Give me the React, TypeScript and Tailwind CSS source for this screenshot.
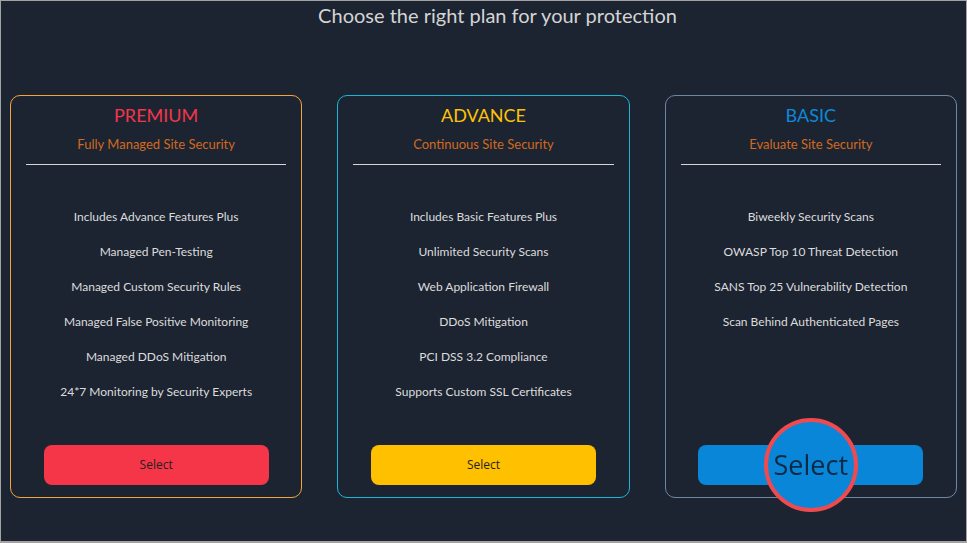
import React from "react";

type Plan = {
    name: string;
    tagline: string;
    features: string[];
    border: string;
    title: string;
    button: string;
    highlight?: boolean;
};

const plans: Plan[] = [
    {
        name: "PREMIUM",
        tagline: "Fully Managed Site Security",
        features: [
            "Includes Advance Features Plus",
            "Managed Pen-Testing",
            "Managed Custom Security Rules",
            "Managed False Positive Monitoring",
            "Managed DDoS Mitigation",
            "24*7 Monitoring by Security Experts",
        ],
        border: "border-[#f5a43c]",
        title: "text-[#f2364b]",
        button: "bg-[#f43648]",
    },
    {
        name: "ADVANCE",
        tagline: "Continuous Site Security",
        features: [
            "Includes Basic Features Plus",
            "Unlimited Security Scans",
            "Web Application Firewall",
            "DDoS Mitigation",
            "PCI DSS 3.2 Compliance",
            "Supports Custom SSL Certificates",
        ],
        border: "border-[#19b6d8]",
        title: "text-[#ffc107]",
        button: "bg-[#ffc000]",
    },
    {
        name: "BASIC",
        tagline: "Evaluate Site Security",
        features: [
            "Biweekly Security Scans",
            "OWASP Top 10 Threat Detection",
            "SANS Top 25 Vulnerability Detection",
            "Scan Behind Authenticated Pages",
        ],
        border: "border-[#6f87a2]",
        title: "text-[#0d89d9]",
        button: "bg-[#0986d8]",
        highlight: true,
    },
];

const PlanCard: React.FC<{ plan: Plan }> = ({ plan }) => (
    <div
        className={`flex h-[403px] flex-col items-center rounded-[10px] border ${plan.border} pt-[7px] pb-[12px]`}
    >
        <h2 className={`text-[18px] leading-[24px] ${plan.title}`}>
            {plan.name}
        </h2>
        <p className="mt-[8px] text-[13px] leading-[18px] text-[#d2691e]">
            {plan.tagline}
        </p>
        <div className="mt-[11px] h-px w-[calc(100%-30px)] bg-[#d6d6d6]" />
        <ul className="mt-[44px] flex flex-col gap-[19px] text-[12px] leading-[16px] text-[#dcdcdc]">
            {plan.features.map((f) => (
                <li key={f} className="text-center">
                    {f}
                </li>
            ))}
        </ul>
        <div className="relative mt-auto">
            {/* zoomed "Select" lens sits over the button label */}
            {plan.highlight ? (
                <>
                    <div className={`h-[40px] w-[225px] rounded-[8px] ${plan.button}`} />
                    <button
                        className="absolute top-1/2 left-1/2 flex h-[94px] w-[94px] -translate-x-1/2 -translate-y-1/2 items-center justify-center rounded-full border-4 border-[#f04a4f] bg-[#0986d8] text-[27px] text-[#0c2a45]"
                        style={{ fontFamily: "'Open Sans', sans-serif" }}
                    >
                        <span className="blur-[0.4px]">Select</span>
                    </button>
                </>
            ) : (
                <button
                    className={`h-[40px] w-[225px] rounded-[8px] ${plan.button} text-[12px] text-[#1f1f1f]`}
                    style={{ fontFamily: "'Open Sans', sans-serif" }}
                >
                    Select
                </button>
            )}
        </div>
    </div>
);

export default function App() {
    return (
        <div
            className="h-[543px] w-[967px] overflow-hidden border-t border-r border-b-2 border-l border-[#a3a3a3] bg-[#1c2432]"
            style={{ fontFamily: "Lato, 'Open Sans', sans-serif" }}
        >
            <h1 className="pl-[28px] text-center text-[20px] leading-[28px] text-[#d4d4d4]">
                Choose the right plan for your protection
            </h1>
            <div className="mt-[66px] grid grid-cols-3 gap-[35px] px-[9px]">
                {plans.map((p) => (
                    <PlanCard key={p.name} plan={p} />
                ))}
            </div>
        </div>
    );
}
